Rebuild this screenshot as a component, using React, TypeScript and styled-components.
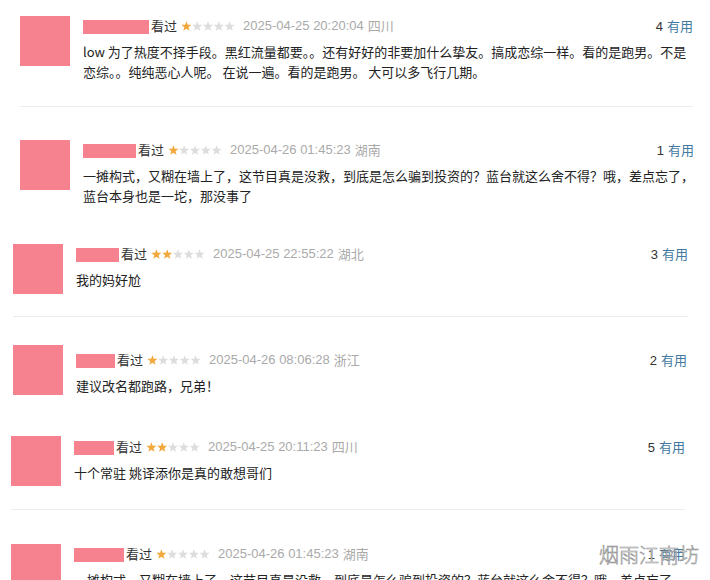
import React from "react";
import styled, { createGlobalStyle } from "styled-components";

const GlobalStyle = createGlobalStyle`
  html, body {
    margin: 0;
    padding: 0;
    background: #ffffff;
    overflow: hidden;
  }
  body {
    font-family: "Noto Sans CJK SC", "Liberation Sans", sans-serif;
    color: #222;
  }
`;

const Page = styled.div`
  position: relative;
  width: 710px;
  height: 580px;
  overflow: hidden;
  background: #fff;
  display: flex;
  flex-direction: column;
`;

const Review = styled.div<{ $ml: number; $mr: number; $mt: number; $pb: number; $divider: boolean }>`
  display: flex;
  align-items: flex-start;
  flex-shrink: 0;
  margin: ${(p) => p.$mt}px ${(p) => p.$mr}px 0 ${(p) => p.$ml}px;
  padding-bottom: ${(p) => p.$pb}px;
  border-bottom: ${(p) => (p.$divider ? "1px solid #ececec" : "none")};
`;

const Avatar = styled.div`
  width: 50px;
  height: 50px;
  flex-shrink: 0;
  background: #f7828f;
`;

const Body = styled.div<{ $dy: number }>`
  flex: 1;
  margin-left: 13px;
  padding-top: ${(p) => p.$dy}px;
  display: flex;
  flex-direction: column;
  gap: 6px;
`;

const Header = styled.div`
  display: flex;
  align-items: center;
  height: 20px;
  font-size: 13px;
  line-height: 20px;
  white-space: nowrap;
`;

const NameMask = styled.span<{ $w: number }>`
  display: inline-block;
  width: ${(p) => p.$w}px;
  height: 14px;
  margin-top: 2px;
  background: #f7828f;
`;

const Watched = styled.span`
  color: #333;
  margin-left: 2px;
`;

const Stars = styled.svg`
  margin-left: 4px;
  flex-shrink: 0;
`;

const Time = styled.span`
  margin-left: 8px;
  color: #aaa;
  font-family: "Liberation Sans", "Noto Sans CJK SC", sans-serif;
  font-size: 13px;
`;

const Loc = styled.span`
  margin-left: 4px;
  color: #aaa;
  font-size: 13px;
`;

const Votes = styled.span`
  margin-left: auto;
  color: #333;
  font-size: 13px;
  font-family: "Liberation Sans", "Noto Sans CJK SC", sans-serif;
`;

const Useful = styled.span`
  color: #4279a0;
  font-family: "Noto Sans CJK SC", sans-serif;
  margin-left: 4px;
`;

const Content = styled.div`
  font-size: 13px;
  line-height: 20px;
  color: #222;
`;

const Line = styled.div`
  white-space: nowrap;
`;

const Watermark = styled.div`
  position: absolute;
  left: 599px;
  top: 541px;
  font-size: 20px;
  line-height: 28px;
  font-weight: 300;
  color: #ffffff;
  -webkit-text-stroke: 0.6px #8f8f8f;
  font-family: "Noto Sans CJK SC", sans-serif;
`;

const starPath = (cx: number) => {
  const pts: string[] = [];
  for (let i = 0; i < 10; i++) {
    const r = i % 2 === 0 ? 5.3 : 2.2;
    const a = (Math.PI / 5) * i - Math.PI / 2;
    pts.push(`${(cx + r * Math.cos(a)).toFixed(2)},${(5.5 + r * Math.sin(a)).toFixed(2)}`);
  }
  return pts.join(" ");
};

const Rating: React.FC<{ value: number }> = ({ value }) => (
  <Stars width="54" height="11" viewBox="0 0 54 11">
    {[0, 1, 2, 3, 4].map((i) => (
      <polygon key={i} points={starPath(5.4 + i * 10.8)} fill={i < value ? "#f2a83a" : "#dddddd"} />
    ))}
  </Stars>
);

type Item = {
  ml: number;
  mr: number;
  mt: number;
  pb: number;
  divider: boolean;
  dy: number;
  nameW: number;
  rating: number;
  time: string;
  loc: string;
  votes: number;
  lines: string[];
};

const items: Item[] = [
  {
    ml: 20, mr: 17, mt: 16, pb: 24, divider: true, dy: 0, nameW: 66, rating: 1,
    time: "2025-04-25 20:20:04", loc: "四川", votes: 4,
    lines: [
      "low 为了热度不择手段。黑红流量都要。。还有好好的非要加什么挚友。搞成恋综一样。看的是跑男。不是",
      "恋综。。纯纯恶心人呢。 在说一遍。看的是跑男。 大可以多飞行几期。",
    ],
  },
  {
    ml: 20, mr: 17, mt: 33, pb: 0, divider: false, dy: 0, nameW: 53, rating: 1,
    time: "2025-04-26 01:45:23", loc: "湖南", votes: 1,
    lines: [
      "一摊构式，又糊在墙上了，这节目真是没救，到底是怎么骗到投资的？蓝台就这么舍不得？哦，差点忘了，",
      "蓝台本身也是一坨，那没事了",
    ],
  },
  {
    ml: 13, mr: 22, mt: 38, pb: 22, divider: true, dy: 0, nameW: 43, rating: 2,
    time: "2025-04-25 22:55:22", loc: "湖北", votes: 3,
    lines: ["我的妈好尬"],
  },
  {
    ml: 13, mr: 23, mt: 28, pb: 0, divider: false, dy: 5, nameW: 39, rating: 1,
    time: "2025-04-26 08:06:28", loc: "浙江", votes: 2,
    lines: ["建议改名都跑路，兄弟！"],
  },
  {
    ml: 11, mr: 25, mt: 40, pb: 23, divider: true, dy: 1, nameW: 40, rating: 2,
    time: "2025-04-25 20:11:23", loc: "四川", votes: 5,
    lines: ["十个常驻 姚译添你是真的敢想哥们"],
  },
  {
    ml: 11, mr: 25, mt: 34, pb: 0, divider: false, dy: 0, nameW: 50, rating: 1,
    time: "2025-04-26 01:45:23", loc: "湖南", votes: 1,
    lines: [
      "一摊构式，又糊在墙上了，这节目真是没救，到底是怎么骗到投资的？蓝台就这么舍不得？哦，差点忘了，",
      "蓝台本身也是一坨，那没事了",
    ],
  },
];

export default function App() {
  return (
    <>
      <GlobalStyle />
      <Page>
        {items.map((it, idx) => (
          <Review key={idx} $ml={it.ml} $mr={it.mr} $mt={it.mt} $pb={it.pb} $divider={it.divider}>
            <Avatar />
            <Body $dy={it.dy}>
              <Header>
                <NameMask $w={it.nameW} />
                <Watched>看过</Watched>
                <Rating value={it.rating} />
                <Time>{it.time}</Time>
                <Loc>{it.loc}</Loc>
                <Votes>
                  {it.votes}
                  <Useful>有用</Useful>
                </Votes>
              </Header>
              <Content>
                {it.lines.map((l, i) => (
                  <Line key={i}>{l}</Line>
                ))}
              </Content>
            </Body>
          </Review>
        ))}
        <Watermark>烟雨江南坊</Watermark>
      </Page>
    </>
  );
}
